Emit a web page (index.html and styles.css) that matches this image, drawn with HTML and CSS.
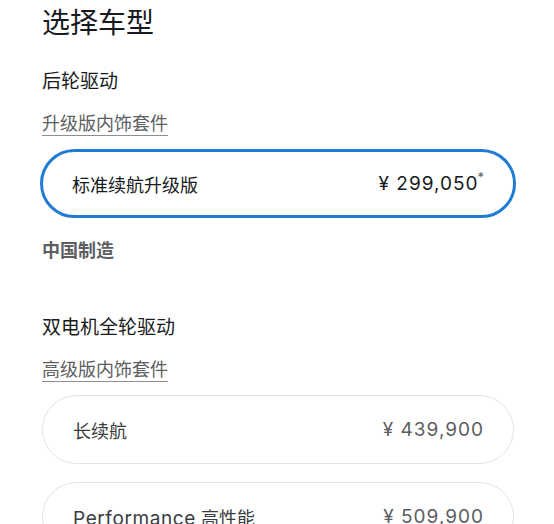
FILE: index.html
```html
<!DOCTYPE html>
<html lang="zh-CN">
<head>
<meta charset="utf-8">
<title>选择车型</title>
<link rel="stylesheet" href="styles.css">
</head>
<body>
<main class="page">
  <h1 class="title">选择车型</h1>

  <section class="group">
    <h2 class="group-title">后轮驱动</h2>
    <a class="interior-link" href="#">升级版内饰套件</a>
    <ul class="options">
      <li class="option selected">
        <span class="option-name">标准续航升级版</span>
        <span class="option-price">¥ 299,050<sup class="mark">*</sup></span>
      </li>
    </ul>
    <p class="origin">中国制造</p>
  </section>

  <section class="group group-second">
    <h2 class="group-title">双电机全轮驱动</h2>
    <a class="interior-link" href="#">高级版内饰套件</a>
    <ul class="options">
      <li class="option">
        <span class="option-name">长续航</span>
        <span class="option-price">¥ 439,900</span>
      </li>
      <li class="option">
        <span class="option-name"><span class="latin">Performance</span> 高性能</span>
        <span class="option-price">¥ 509,900</span>
      </li>
    </ul>
  </section>
</main>
</body>
</html>
```

FILE: styles.css
```css
html, body {
  margin: 0;
  padding: 0;
  background: #ffffff;
}

body {
  font-family: Inter, "Noto Sans CJK SC", sans-serif;
  color: #171a20;
  overflow: hidden;
}

.page {
  width: 472px;
  padding: 5px 0 0 42px;
}

.title {
  margin: 0;
  font-size: 28px;
  line-height: 36px;
  font-weight: 400;
  color: #171a20;
}

.group {
  display: flex;
  flex-direction: column;
  align-items: flex-start;
  margin-top: 28px;
}

.group-second {
  margin-top: 52px;
}

.group-title {
  margin: 0;
  font-size: 19px;
  line-height: 26px;
  font-weight: 400;
  color: #171a20;
}

.interior-link {
  margin-top: 17px;
  font-size: 18px;
  line-height: 24px;
  color: #5c5e62;
  text-decoration: underline;
  text-decoration-color: #8e8e8e;
  text-decoration-thickness: 1px;
  text-underline-offset: 5px;
}

.options {
  list-style: none;
  margin: 13px 0 0 0;
  padding: 0;
  width: 100%;
  display: flex;
  flex-direction: column;
  gap: 18px;
}

.option {
  box-sizing: border-box;
  height: 69px;
  border: 1px solid #e2e2e2;
  border-radius: 35px;
  display: flex;
  align-items: center;
  justify-content: space-between;
  padding: 0 29px 0 30px;
  font-size: 18px;
  color: #393c41;
}

.latin {
  font-size: 19px;
  letter-spacing: 0.6px;
}

.option-price {
  font-size: 19px;
  color: #5c5e62;
  letter-spacing: 1px;
}

.option.selected {
  height: 69px;
  margin: 0 -2px;
  padding: 0 28px 0 29px;
  border: 3px solid #1f7bd3;
  color: #171a20;
}

.option.selected .option-price {
  color: #171a20;
}

.mark {
  font-size: 13px;
  vertical-align: top;
  position: relative;
  top: -3px;
  margin-left: -1px;
  color: #5c5e62;
}

.origin {
  margin: 21px 0 0 0;
  font-size: 18px;
  line-height: 24px;
  font-weight: 700;
  color: #5c5e62;
}
```
